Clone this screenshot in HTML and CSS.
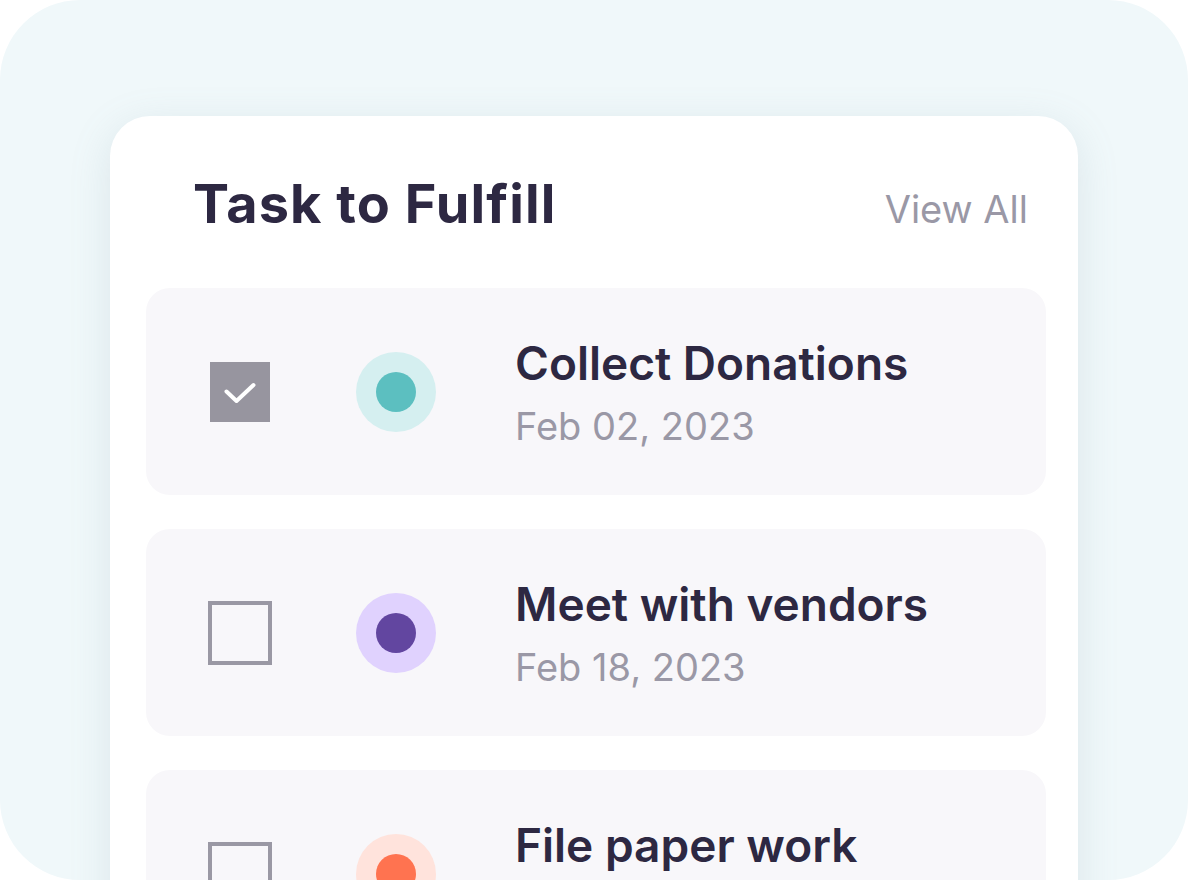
FILE: index.html
```html
<!DOCTYPE html>
<html>
<head>
<meta charset="utf-8">
<link rel="stylesheet" href="styles.css">
</head>
<body>
<div class="frame">
  <div class="card">
    <div class="card-head">
      <h1 class="card-title">Task to Fulfill</h1>
      <a class="view-all">View All</a>
    </div>
    <div class="tasks">
      <div class="task">
        <span class="check checked">
          <svg width="60" height="60" viewBox="0 0 60 60"><path d="M16.5 29.5 L26.5 39 L43.5 23" fill="none" stroke="#fff" stroke-width="4" stroke-linecap="round" stroke-linejoin="round"/></svg>
        </span>
        <span class="dot teal"><span class="dot-core"></span></span>
        <div class="task-text">
          <div class="task-name">Collect Donations</div>
          <div class="task-date">Feb 02, 2023</div>
        </div>
      </div>
      <div class="task">
        <span class="check"></span>
        <span class="dot purple"><span class="dot-core"></span></span>
        <div class="task-text">
          <div class="task-name">Meet with vendors</div>
          <div class="task-date">Feb 18, 2023</div>
        </div>
      </div>
      <div class="task">
        <span class="check"></span>
        <span class="dot orange"><span class="dot-core"></span></span>
        <div class="task-text">
          <div class="task-name">File paper work</div>
          <div class="task-date">Mar 01, 2023</div>
        </div>
      </div>
    </div>
  </div>
</div>
</body>
</html>
```

FILE: styles.css
```css
html, body {
  margin: 0;
  padding: 0;
  background: #ffffff;
}
body {
  font-family: Inter, "Noto Sans", sans-serif;
}
.frame {
  width: 1188px;
  height: 880px;
  box-sizing: border-box;
  background: #f0f8fa;
  border-radius: 80px;
  overflow: hidden;
  padding: 116px 110px 0 110px;
}
.card {
  background: #ffffff;
  border-radius: 40px;
  box-shadow: 0 10px 40px rgba(120, 150, 160, 0.18);
  padding: 61px 32px 40px 36px;
  height: 900px;
}
.card-head {
  display: flex;
  justify-content: space-between;
  align-items: baseline;
  padding: 0 18px 0 47px;
}
.card-title {
  margin: 0;
  font-size: 54px;
  line-height: 54px;
  font-weight: 700;
  color: #2d2842;
  letter-spacing: 1.1px;
}
.view-all {
  font-size: 38px;
  color: #9a98a6;
  font-weight: 400;
}
.tasks {
  margin-top: 56px;
  display: flex;
  flex-direction: column;
  gap: 34px;
}
.task {
  height: 207px;
  background: #f8f7fa;
  border-radius: 24px;
  display: flex;
  align-items: center;
  padding-left: 62px;
}
.check {
  width: 64px;
  height: 64px;
  box-sizing: border-box;
  border: 4px solid #9a98a4;
  display: flex;
  align-items: center;
  justify-content: center;
  flex: none;
}
.check.checked {
  width: 60px;
  height: 60px;
  margin: 0 2px;
  border: none;
  background: #97959f;
}
.check svg {
  display: block;
}
.dot {
  width: 80px;
  height: 80px;
  border-radius: 50%;
  margin-left: 84px;
  display: flex;
  align-items: center;
  justify-content: center;
  flex: none;
}
.dot-core {
  width: 40px;
  height: 40px;
  border-radius: 50%;
}
.teal { background: #d5eff0; }
.teal .dot-core { background: #5cbfc0; }
.purple { background: #e0d2fe; }
.purple .dot-core { background: #6246a0; }
.orange { background: #ffe3dc; }
.orange .dot-core { background: #ff7350; }
.task-text {
  margin-left: 79px;
}
.task-name {
  font-size: 46px;
  line-height: 60px;
  font-weight: 600;
  color: #2d2842;
}
.task-date {
  margin-top: 8px;
  font-size: 38px;
  line-height: 50px;
  color: #9a98a6;
}
```
